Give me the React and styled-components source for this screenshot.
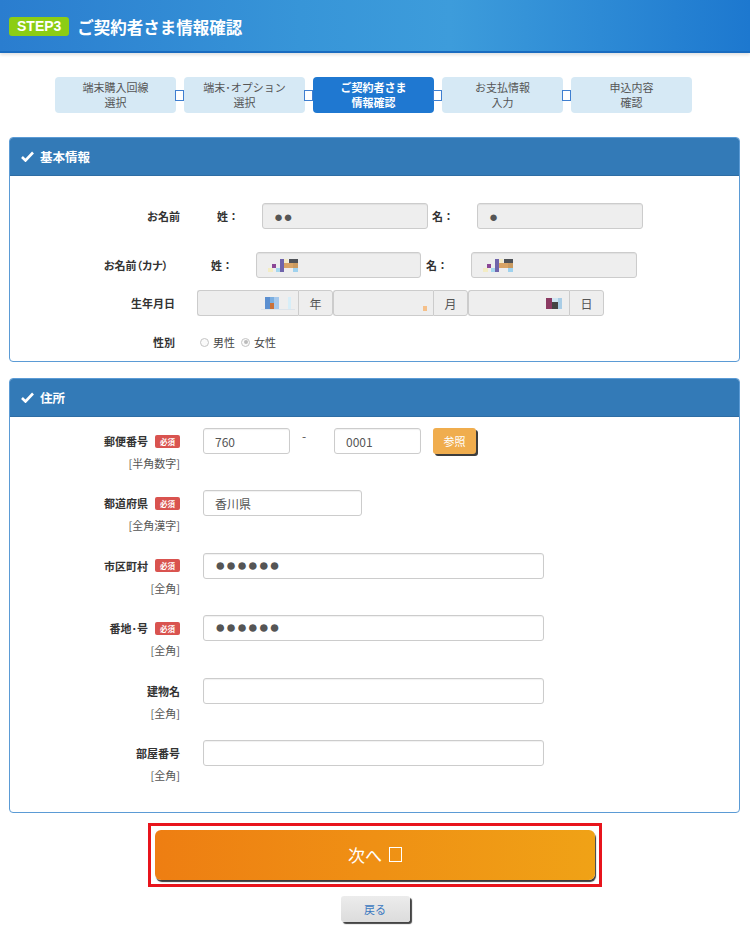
import React from "react";
import styled, { createGlobalStyle } from "styled-components";

const Global = createGlobalStyle`
  html, body { margin: 0; padding: 0; background: #fff; }
  body { font-family: "Noto Sans CJK JP", "Noto Sans", sans-serif; color: #333; width: 750px; }
  * { box-sizing: border-box; }
`;

const Page = styled.div`
  width: 750px;
  padding-bottom: 10px;
`;

const Header = styled.header`
  height: 53px;
  background: linear-gradient(to right, #2a7dcf 0%, #3795d8 40%, #3d9cdb 60%, #1d78cf 100%);
  border-bottom: 2px solid #1a6cc0;
  box-shadow: 0 2px 3px rgba(0, 0, 0, 0.12);
  display: flex;
  align-items: center;
  padding: 2px 0 0 9px;
`;

const StepBadge = styled.span`
  display: inline-block;
  height: 19px;
  line-height: 19px;
  padding: 0 8px;
  border-radius: 3px;
  background: #8ccd14;
  color: #fff;
  font-family: "Liberation Sans", Arial, sans-serif;
  font-weight: bold;
  font-size: 14px;
`;

const Title = styled.h1`
  margin: 0 0 0 8px;
  color: #fff;
  font-size: 16.5px;
  font-weight: bold;
`;

const Steps = styled.nav`
  display: flex;
  align-items: center;
  margin-top: 24px;
  padding-left: 55px;
`;

const Step = styled.div`
  width: 121px;
  height: 36px;
  border-radius: 4px;
  background: ${(p) => (p.$active ? "#1f78d1" : "#d6e9f5")};
  color: ${(p) => (p.$active ? "#fff" : "#555")};
  font-weight: ${(p) => (p.$active ? "bold" : "normal")};
  font-size: 11px;
  line-height: 15px;
  display: flex;
  align-items: center;
  justify-content: center;
  text-align: center;
`;

const StepSep = styled.div`
  width: 8px;
  display: flex;
  justify-content: flex-start;
  &::before {
    content: "";
    display: block;
    width: 7px;
    height: 9px;
    border: 1.5px solid #3f7fd0;
    background: #fff;
    margin-left: -1px;
  }
`;

const Panel = styled.section`
  margin: ${(p) => p.$mt}px 10px 0 9px;
  border: 1px solid #5b9bd5;
  border-radius: 4px;
  overflow: hidden;
`;

const PanelHead = styled.div`
  height: 38px;
  background: #337ab7;
  border-bottom: 1px solid #2e6da4;
  color: #fff;
  font-weight: bold;
  font-size: 12.5px;
  display: flex;
  align-items: center;
  gap: 6px;
  padding-left: 11px;
`;

const PanelBody = styled.div`
  padding: ${(p) => p.$pad};
`;

const Row = styled.div`
  display: flex;
  align-items: center;
  height: ${(p) => p.$h || 26}px;
  margin-top: ${(p) => p.$mt || 0}px;
`;

const RowLabel = styled.div`
  width: ${(p) => p.$w}px;
  text-align: right;
  font-weight: bold;
  font-size: 11px;
  color: #333;
  flex: none;
  font-feature-settings: ${(p) => (p.$palt ? '"palt"' : "normal")};
`;

const SubLabel = styled.div`
  width: 45px;
  margin-left: ${(p) => p.$ml}px;
  font-weight: bold;
  font-size: 11px;
  color: #333;
  flex: none;
`;

const Field = styled.div`
  width: ${(p) => p.$w}px;
  height: 26px;
  flex: none;
  border: 1px solid #ccc;
  border-radius: 3px;
  background: ${(p) => (p.$disabled ? "#eee" : "#fff")};
  box-shadow: inset 0 1px 1px rgba(0, 0, 0, 0.06);
  display: flex;
  align-items: center;
  justify-content: ${(p) => (p.$end ? "flex-end" : "flex-start")};
  padding: 0 ${(p) => (p.$end ? 6 : 11)}px 0 11px;
  font-size: 12px;
  color: #555;
  margin-left: ${(p) => p.$ml || 0}px;
`;

const Dots = styled.span`
  font-family: "Liberation Sans", Arial, sans-serif;
  font-size: ${(p) => p.$size}px;
  letter-spacing: ${(p) => p.$ls || 0}px;
  color: #555;
  line-height: 1;
`;

const Group = styled.div`
  display: flex;
  flex: none;
  margin-left: ${(p) => p.$ml || 0}px;
`;

const GroupInput = styled(Field)`
  border-radius: 3px 0 0 3px;
  border-right: none;
  box-shadow: none;
  position: relative;
`;

const Addon = styled.div`
  width: 35px;
  height: 26px;
  border: 1px solid #ccc;
  border-radius: 0 3px 3px 0;
  background: #eee;
  display: flex;
  align-items: center;
  justify-content: center;
  font-size: 12px;
  color: #555;
`;

const Underline = styled.span`
  position: absolute;
  left: 63px;
  bottom: 5px;
  width: 34px;
  height: 1px;
  background: #dde4ea;
`;

const Radios = styled.div`
  display: flex;
  align-items: center;
  margin-left: 25px;
  font-size: 11px;
  color: #444;
`;

const Radio = styled.span`
  width: 9px;
  height: 9px;
  border-radius: 50%;
  border: 1px solid #c4c4c4;
  background: #fafafa;
  margin: 0 4px 0 ${(p) => p.$ml || 0}px;
  display: inline-flex;
  align-items: center;
  justify-content: center;
  &::after {
    content: "";
    width: 4px;
    height: 4px;
    border-radius: 50%;
    background: ${(p) => (p.$checked ? "#bbb" : "transparent")};
  }
`;

const AddrRows = styled.div`
  display: flex;
  flex-direction: column;
  gap: 18.4px;
`;

const AddrRow = styled.div`
  display: flex;
  align-items: flex-start;
`;

const AddrLabel = styled.div`
  width: 170px;
  flex: none;
  display: flex;
  flex-direction: column;
  align-items: flex-end;
`;

const AddrName = styled.div`
  height: 26px;
  display: flex;
  align-items: center;
  font-weight: bold;
  font-size: 11px;
  color: #333;
`;

const Required = styled.span`
  display: inline-flex;
  align-items: center;
  justify-content: center;
  width: 25px;
  height: 13px;
  margin-left: 7px;
  border-radius: 2px;
  background: #d9534f;
  color: #fff;
  font-size: 7.5px;
  font-weight: bold;
`;

const AddrHint = styled.div`
  height: 18px;
  line-height: 18px;
  font-size: 11px;
  color: #555;
`;

const AddrFields = styled.div`
  display: flex;
  align-items: flex-start;
  margin-left: 23px;
`;

const Dash = styled.span`
  width: 44px;
  text-align: center;
  padding-right: 16px;
  font-size: 12px;
  color: #555;
  line-height: 16px;
  flex: none;
`;

const LookupButton = styled.button`
  margin-left: 12px;
  width: 43px;
  height: 26px;
  border: none;
  border-radius: 3px;
  background: #f0ad4e;
  color: #fff;
  font-family: inherit;
  font-size: 11px;
  box-shadow: 2px 2px 0 #3d3d3d;
  padding: 0;
`;

const NextFrame = styled.div`
  width: 454px;
  margin: 10px auto 0;
  border: 3px solid #e8141c;
  padding: 4px;
`;

const NextButton = styled.button`
  width: 100%;
  height: 50px;
  border: none;
  border-radius: 6px;
  background: linear-gradient(to right, #ee7e12, #f0a216);
  box-shadow: 1px 2px 1px #3a3a3a;
  color: #fff;
  font-family: inherit;
  font-size: 17px;
  display: flex;
  align-items: center;
  justify-content: center;
  gap: 7px;
`;

const Tofu = styled.span`
  display: inline-block;
  width: 13px;
  height: 15px;
  border: 1.5px solid #fff;
`;

const BackButton = styled.button`
  display: block;
  width: 69px;
  height: 26px;
  margin: 9px auto 0;
  border: none;
  border-radius: 3px;
  background: linear-gradient(#ececec, #dcdcdc);
  box-shadow: 2px 2px 1px #444;
  color: #3a78c0;
  font-family: inherit;
  font-size: 11px;
  padding: 0;
`;

const Check = () => (
  <svg width="13" height="11" viewBox="0 0 13 11">
    <path d="M1 6 L4.5 9.5 L12 1.5" stroke="#fff" strokeWidth="2.6" fill="none" />
  </svg>
);

const Mosaic = ({ w, h, rects }) => (
  <svg width={w} height={h} viewBox={`0 0 ${w} ${h}`}>
    {rects.map(([x, y, rw, rh, c], i) => (
      <rect key={i} x={x} y={y} width={rw} height={rh} fill={c} />
    ))}
  </svg>
);

const kana = [
  [0, 9, 5, 4, "#f3ecc4"],
  [4, 5, 4, 4, "#8b4796"],
  [8, 9, 4, 4, "#a6d8ef"],
  [12, 0, 4, 13, "#6f64ab"],
  [16, 0, 4, 4, "#f4ecc8"],
  [16, 4, 9, 5, "#d9a465"],
  [21, 0, 9, 4, "#4f5257"],
  [25, 4, 5, 5, "#c99a60"],
  [25, 9, 5, 4, "#9fd2ee"],
];
const yearM = [
  [0, 0, 5, 12, "#5b8fd0"],
  [5, 0, 4, 6, "#7aaee0"],
  [5, 6, 4, 6, "#c9713a"],
  [9, 0, 5, 12, "#a5c8ec"],
  [23, 0, 3, 12, "#d7eef8"],
];
const monthM = [[0, 0, 4, 5, "#f5c08a"]];
const dayM = [
  [0, 0, 6, 11, "#8b3a62"],
  [6, 0, 6, 4, "#cfe6f3"],
  [6, 4, 6, 7, "#444"],
  [12, 0, 4, 11, "#a9cde6"],
];

const steps = [
  ["端末購入回線", "選択"],
  ["端末･オプション", "選択"],
  ["ご契約者さま", "情報確認"],
  ["お支払情報", "入力"],
  ["申込内容", "確認"],
];

const addr = [
  { name: "郵便番号", req: true, hint: "[半角数字]", kind: "zip" },
  { name: "都道府県", req: true, hint: "[全角漢字]", w: 159, value: "香川県" },
  { name: "市区町村", req: true, hint: "[全角]", w: 341, dots: true },
  { name: "番地･号", req: true, hint: "[全角]", w: 341, dots: true },
  { name: "建物名", hint: "[全角]", w: 341 },
  { name: "部屋番号", hint: "[全角]", w: 341 },
];

export default function App() {
  return (
    <Page>
      <Global />
      <Header>
        <StepBadge>STEP3</StepBadge>
        <Title>ご契約者さま情報確認</Title>
      </Header>

      <Steps>
        {steps.map(([a, b], i) => (
          <React.Fragment key={a}>
            <Step $active={i === 2}>
              {a}
              <br />
              {b}
            </Step>
            {i < steps.length - 1 && <StepSep />}
          </React.Fragment>
        ))}
      </Steps>

      <Panel $mt={24}>
        <PanelHead>
          <Check />
          基本情報
        </PanelHead>
        <PanelBody $pad="27px 0 11px">
          <Row>
            <RowLabel $w={170}>お名前</RowLabel>
            <SubLabel $ml={37}>姓：</SubLabel>
            <Field $w={166} $disabled>
              <Dots $size={15} $ls={0.5}>●●</Dots>
            </Field>
            <SubLabel $ml={4}>名：</SubLabel>
            <Field $w={166} $disabled>
              <Dots $size={15}>●</Dots>
            </Field>
          </Row>
          <Row $mt={23}>
            <RowLabel $w={158} $palt>お名前（カナ）</RowLabel>
            <SubLabel $ml={43}>姓：</SubLabel>
            <Field $w={165} $disabled>
              <Mosaic w={31} h={13} rects={kana} />
            </Field>
            <SubLabel $ml={5}>名：</SubLabel>
            <Field $w={166} $disabled>
              <Mosaic w={31} h={13} rects={kana} />
            </Field>
          </Row>
          <Row $mt={12}>
            <RowLabel $w={165}>生年月日</RowLabel>
            <Group $ml={22}>
              <GroupInput $w={101} $disabled $end>
                <Mosaic w={27} h={12} rects={yearM} />
                <Underline />
              </GroupInput>
              <Addon>年</Addon>
            </Group>
            <Group>
              <GroupInput $w={100} $disabled $end>
                <span style={{ alignSelf: "flex-start", marginTop: 6 }}>
                  <Mosaic w={4} h={5} rects={monthM} />
                </span>
              </GroupInput>
              <Addon>月</Addon>
            </Group>
            <Group>
              <GroupInput $w={101} $disabled $end>
                <Mosaic w={17} h={11} rects={dayM} />
              </GroupInput>
              <Addon>日</Addon>
            </Group>
          </Row>
          <Row $mt={18} $h={16}>
            <RowLabel $w={165}>性別</RowLabel>
            <Radios>
              <Radio />
              男性
              <Radio $ml={6} $checked />
              女性
            </Radios>
          </Row>
        </PanelBody>
      </Panel>

      <Panel $mt={16}>
        <PanelHead>
          <Check />
          住所
        </PanelHead>
        <PanelBody $pad="11px 0 28px">
          <AddrRows>
            {addr.map((r) => (
              <AddrRow key={r.name}>
                <AddrLabel>
                  <AddrName>
                    {r.name}
                    {r.req && <Required>必須</Required>}
                  </AddrName>
                  <AddrHint>{r.hint}</AddrHint>
                </AddrLabel>
                <AddrFields>
                  {r.kind === "zip" ? (
                    <>
                      <Field $w={87}>760</Field>
                      <Dash>-</Dash>
                      <Field $w={87}>0001</Field>
                      <LookupButton>参照</LookupButton>
                    </>
                  ) : (
                    <Field $w={r.w}>
                      {r.dots ? <Dots $size={17.5} $ls={0.3}>●●●●●●</Dots> : r.value}
                    </Field>
                  )}
                </AddrFields>
              </AddrRow>
            ))}
          </AddrRows>
        </PanelBody>
      </Panel>

      <NextFrame>
        <NextButton>
          次へ
          <Tofu />
        </NextButton>
      </NextFrame>
      <BackButton>戻る</BackButton>
    </Page>
  );
}
